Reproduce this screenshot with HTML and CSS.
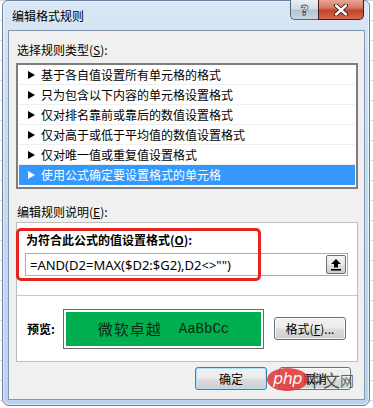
FILE: index.html
```html
<!DOCTYPE html>
<html lang="zh-CN">
<head>
<meta charset="utf-8">
<title>编辑格式规则</title>
<link rel="stylesheet" href="styles.css">
</head>
<body>
<div class="desk">
  <div class="window">
    <div class="titlebar">
      <span class="title">编辑格式规则</span>
      <div class="controls">
        <div class="ctl help"><span>?</span></div>
        <div class="ctl close">
          <svg width="16" height="12" viewBox="0 0 16 12"><path d="M3 1.5 L13 10.5 M13 1.5 L3 10.5" stroke="#3a1a14" stroke-width="4.2" stroke-linecap="round"/><path d="M3 1.5 L13 10.5 M13 1.5 L3 10.5" stroke="#fff" stroke-width="2.4" stroke-linecap="round"/></svg>
        </div>
      </div>
    </div>
    <div class="client">
      <div class="label">选择规则类型(<u>S</u>):</div>
      <div class="list">
        <div class="item"><span class="tri"></span>基于各自值设置所有单元格的格式</div>
        <div class="item"><span class="tri"></span>只为包含以下内容的单元格设置格式</div>
        <div class="item"><span class="tri"></span>仅对排名靠前或靠后的数值设置格式</div>
        <div class="item"><span class="tri"></span>仅对高于或低于平均值的数值设置格式</div>
        <div class="item"><span class="tri"></span>仅对唯一值或重复值设置格式</div>
        <div class="item sel"><span class="tri"></span>使用公式确定要设置格式的单元格</div>
      </div>
      <div class="label label2">编辑规则说明(<u>E</u>):</div>
      <div class="group">
        <div class="top">
          <div class="bold">为符合此公式的值设置格式(<u>O</u>):</div>
          <div class="input">
            <span class="formula">=AND(D2=MAX($D2:$G2),D2&lt;&gt;"")</span>
            <div class="pick">
              <svg width="12" height="13" viewBox="0 0 12 13"><path d="M6 1 L11 6 H8 V9.5 H4 V6 H1 Z" fill="#000"/><rect x="1" y="11" width="10" height="1.6" fill="#000"/></svg>
            </div>
          </div>
          <div class="redmark"></div>
        </div>
        <div class="bottom">
          <div class="bold pvlabel">预览:</div>
          <div class="preview"><div class="green"><span class="cjk">微软卓越</span><span class="lat">AaBbCc</span></div></div>
          <div class="btn fmt">格式(<u>F</u>)...</div>
        </div>
      </div>
      <div class="actions">
        <div class="btn ok">确定</div>
        <div class="btn cancel">取消</div>
        <div class="watermark"><span class="php">php</span><span class="zh">中文</span><span class="wang">网</span></div>
      </div>
    </div>
  </div>
</div>
</body>
</html>
```

FILE: styles.css
```css
* { box-sizing: border-box; }
html, body { margin: 0; padding: 0; }
body {
  font-family: "Noto Sans CJK SC", "Noto Sans", sans-serif;
  font-size: 12px;
  color: #000;
}
.desk {
  width: 373px;
  height: 408px;
  background-color: #fff;
  background-image:
    linear-gradient(#dadada 1px, transparent 1px);
  background-size: 100% 20px;
  background-position: 0 0;
  overflow: hidden;
}
.window {
  margin-left: 2px;
  width: 368px;
  height: 406px;
  border: 1px solid #6a7f9b;
  border-radius: 6px 6px 7px 7px;
  background: linear-gradient(180deg, #d9e6f5 0%, #c8dbf0 40%, #bcd2ec 100%);
  box-shadow: inset 0 0 0 1px rgba(255,255,255,0.55);
  padding: 0 4px 5px 5px;
  display: flex;
  flex-direction: column;
}
.titlebar {
  height: 29px;
  display: flex;
  align-items: flex-start;
  padding-left: 4px;
}
.title {
  margin-top: 6px;
  line-height: 18px;
  font-size: 12px;
  color: #000;
}
.controls {
  margin-left: auto;
  margin-right: 1px;
  display: flex;
  margin-top: -1px;
}
.ctl {
  height: 20px;
  display: flex;
  align-items: center;
  justify-content: center;
  border: 1px solid #56657a;
  border-top: none;
}
.help {
  width: 28px;
  border-radius: 0 0 0 5px;
  border-right: none;
  background: linear-gradient(180deg, #e9eff6 0%, #d2dde9 45%, #b3c3d6 55%, #c9d6e4 100%);
}
.help span {
  font-family: "DejaVu Sans", sans-serif;
  font-weight: bold;
  font-size: 14px;
  color: #fff;
  line-height: 14px;
  -webkit-text-stroke: 0.8px #404c5c;
}
.close {
  width: 46px;
  border-radius: 0 0 5px 0;
  border-color: #4a1e18;
  background: linear-gradient(180deg, #e7a798 0%, #d77a66 40%, #c2432c 55%, #d5684f 100%);
}
.client {
  flex: 1;
  background: #f0f0f0;
  border: 1px solid #8497b1;
  padding: 11px 6px 0 7px;
  display: flex;
  flex-direction: column;
}
.label {
  line-height: 16px;
  padding-left: 1px;
}
u { text-decoration: underline; text-underline-offset: 1px; }
.list {
  margin-top: 5px;
  height: 126px;
  border: 2px solid #7e7e7e;
  background: #fff;
  padding: 0 1px;
}
.item {
  height: 20px;
  display: flex;
  align-items: center;
  padding-left: 22px;
  border-bottom: 1px solid #efefef;
  position: relative;
  line-height: 20px;
}
.item.sel {
  background: #3399ff;
  color: #fff;
  border-bottom: none;
}
.tri {
  position: absolute;
  left: 9px;
  top: 6px;
  width: 0;
  height: 0;
  border-top: 4px solid transparent;
  border-bottom: 4px solid transparent;
  border-left: 7px solid #000;
}
.sel .tri { border-left-color: #fff; }
.label2 { margin-top: 15px; }
.group {
  margin-top: 2px;
  height: 140px;
  border: 1px solid #bdbdbd;
  background: #fff;
  display: flex;
  flex-direction: column;
}
.top {
  position: relative;
  height: 73px;
  border-bottom: 1px solid #c9c9c9;
  padding: 9px 9px 0 8px;
}
.bold {
  font-weight: bold;
  line-height: 16px;
  padding-left: 1px;
}
.input {
  margin-top: 5px;
  height: 23px;
  border: 1px solid #abadb3;
  background: #fff;
  display: flex;
  align-items: center;
  padding-left: 4px;
}
.formula {
  font-family: "Noto Sans", sans-serif;
  font-size: 13px;
  line-height: 20px;
}
.pick {
  margin-left: auto;
  margin-right: 1px;
  width: 20px;
  height: 19px;
  border: 1px solid #707070;
  border-radius: 2px;
  background: linear-gradient(180deg, #f4f4f4 0%, #e9e9e9 50%, #dcdcdc 51%, #cfcfcf 100%);
  display: flex;
  align-items: center;
  justify-content: center;
}
.redmark {
  position: absolute;
  left: -1px;
  top: 5px;
  width: 245px;
  height: 53px;
  border: 3px solid #e6231f;
  border-radius: 5px;
  pointer-events: none;
}
.bottom {
  flex: 1;
  display: flex;
  align-items: center;
  padding-left: 9px;
}
.pvlabel { width: 37px; }
.preview {
  width: 201px;
  height: 40px;
  border: 1px solid #6a6a6a;
  padding: 2px;
  background: #fff;
  margin-top: 1px;
}
.green {
  height: 100%;
  background: #00b050;
  display: flex;
  align-items: center;
  justify-content: center;
  color: #0c2a15;
}
.cjk {
  font-family: "Noto Sans CJK SC", sans-serif;
  font-weight: 400;
  font-size: 15px;
  letter-spacing: 1px;
  line-height: 18px;
}
.lat {
  margin-left: 17px;
  font-family: "Liberation Mono", monospace;
  font-size: 14px;
  line-height: 18px;
}
.btn {
  width: 72px;
  height: 23px;
  border: 1px solid #707070;
  border-radius: 3px;
  background: linear-gradient(180deg, #f2f2f2 0%, #ebebeb 48%, #dddddd 52%, #cfcfcf 100%);
  box-shadow: inset 0 0 0 1px rgba(255,255,255,0.7);
  display: flex;
  align-items: center;
  justify-content: center;
  line-height: 16px;
}
.fmt { margin-left: 10px; }
.actions {
  margin-top: 5px;
  display: flex;
  justify-content: flex-end;
  gap: 12px;
  padding-right: 7px;
  position: relative;
}
.ok {
  border-color: #3c7fb1;
  box-shadow: inset 0 0 0 1px #b2e0f8;
}
.watermark {
  position: absolute;
  right: 4px;
  top: 1px;
  display: flex;
  align-items: center;
  pointer-events: none;
}
.php {
  width: 41px;
  height: 23px;
  border-radius: 50%;
  background: rgba(226, 52, 52, 0.85);
  color: rgba(255,255,255,0.95);
  font-family: "DejaVu Sans", sans-serif;
  font-style: italic;
  font-size: 16px;
  line-height: 21px;
  text-align: center;
  letter-spacing: -0.5px;
}
.zh {
  margin-left: -2px;
  font-size: 17px;
  color: rgba(40, 40, 40, 0.8);
  line-height: 20px;
}
.wang {
  font-size: 14px;
  color: rgba(60, 60, 60, 0.75);
  line-height: 20px;
}
```
